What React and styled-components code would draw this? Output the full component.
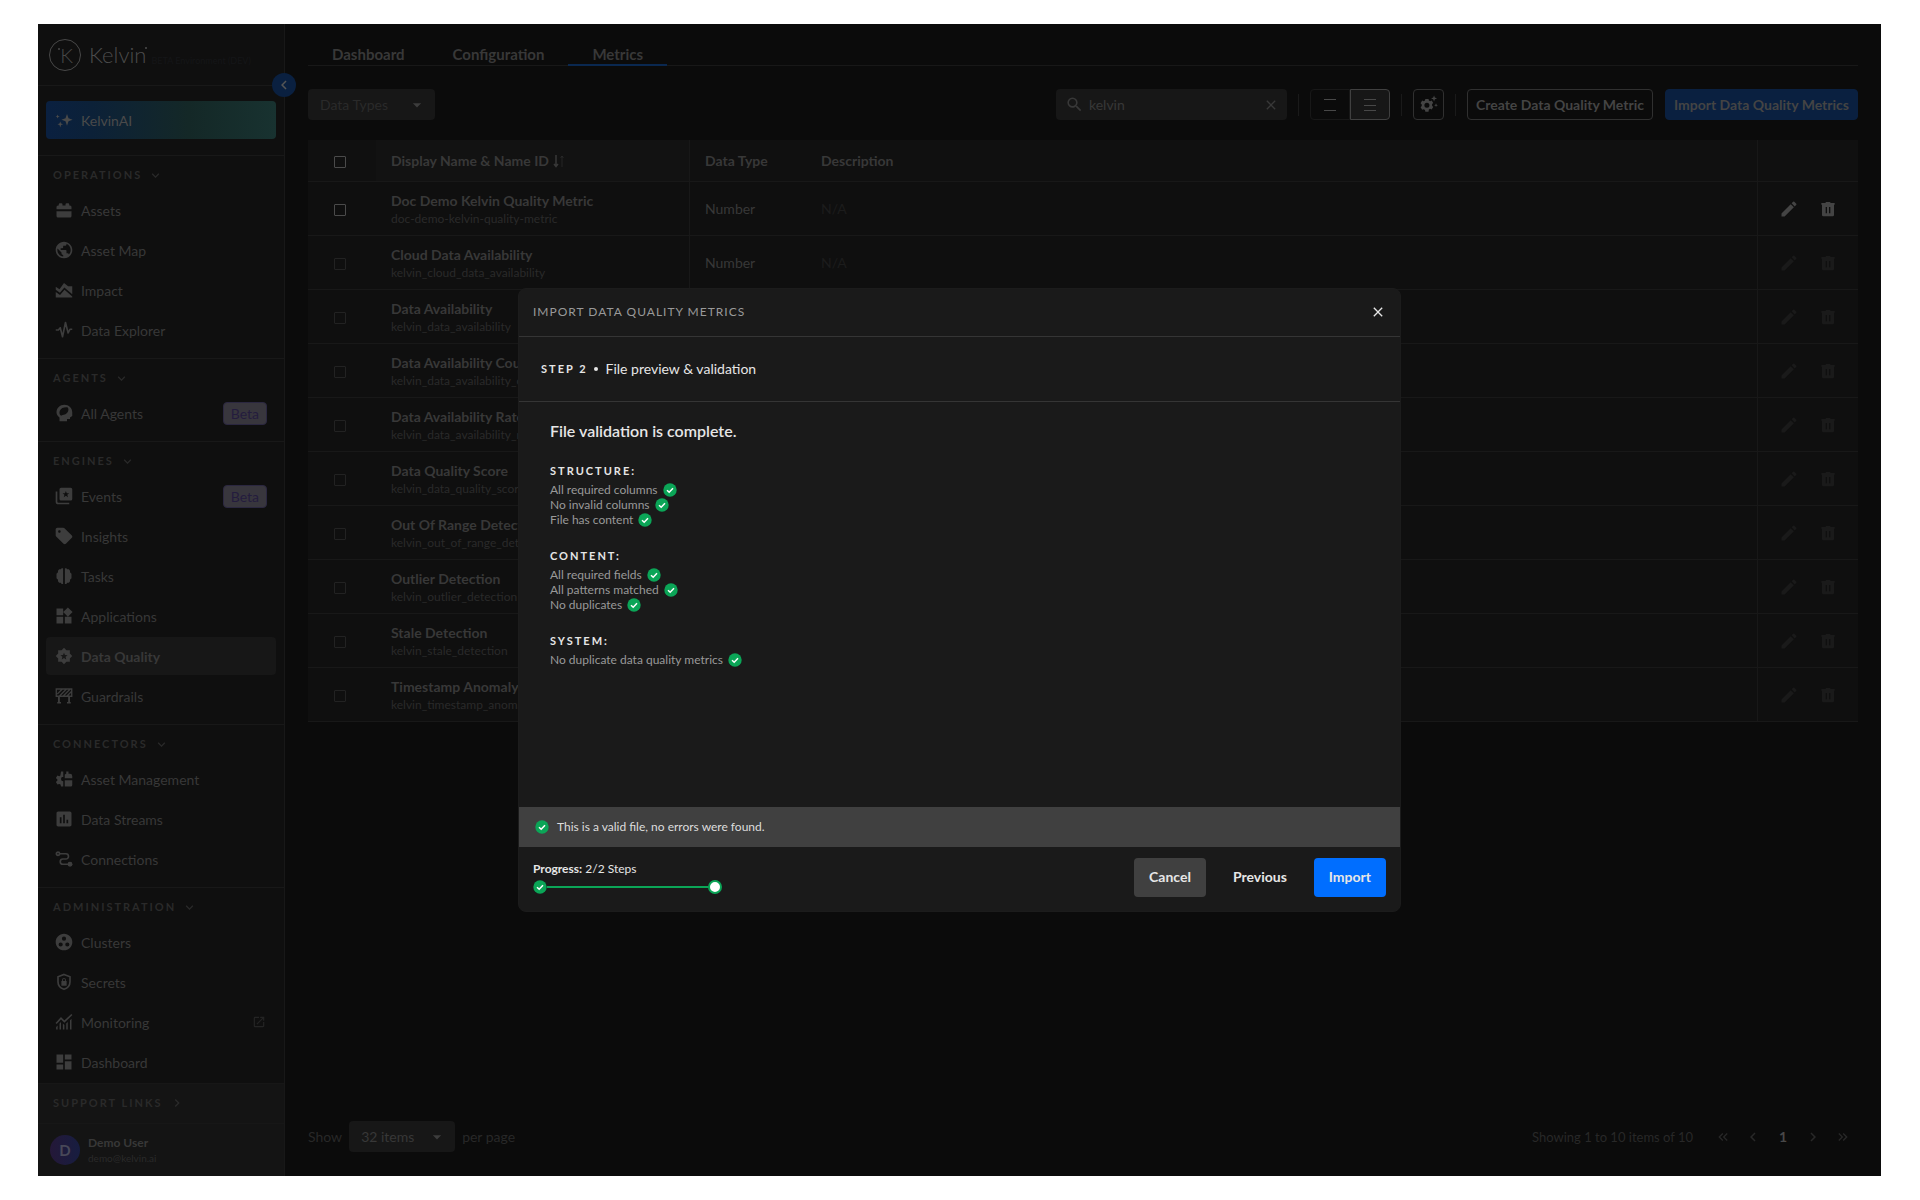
import React from 'react';
import styled, {createGlobalStyle, ThemeProvider} from 'styled-components';
import {
    MdPublic, MdSell, MdWidgets, MdInsertChart, MdGroupWork, MdDashboard,
    MdOpenInNew, MdEdit, MdSearch, MdClose, MdExpandMore, MdChevronRight, MdChevronLeft,
    MdArrowDropDown, MdKeyboardDoubleArrowLeft, MdKeyboardDoubleArrowRight,
} from 'react-icons/md';

const theme = {
    font: 'Lato, "Liberation Sans", sans-serif',
    weights: {
        semiBold: 600,
        bold: 700,
    },
    colors: {
        page: '#0b0b0b',
        sidebar: '#0f0f0f',
        table: '#0f0f0f',
        field: '#171717',
        line: '#181818',
        heading: '#2a2a2a',
        text: '#383838',
        icon: '#3d3d3d',
        faded: '#282828',
        blue: '#0a2040',
        green: '#0ba557',
        modal: '#1a1a1a',
        modalLine: '#353535',
        raised: '#404040',
        primary: '#006eff',
    },
};

const GlobalStyle = createGlobalStyle`
    *, *::before, *::after {
        box-sizing: border-box;
    }

    body {
        margin: 0;
        background: #fff;
        font-family: Lato, "Liberation Sans", sans-serif;
        font-size: 14px;
    }

    button, input, select {
        font: inherit;
        color: inherit;
        margin: 0;
    }

    button {
        padding: 0;
        border: 0;
        background: none;
    }

    h1, h2, h3, p, ul {
        margin: 0;
        padding: 0;
        font-weight: inherit;
        list-style: none;
    }

    a {
        color: inherit;
        text-decoration: none;
    }

    svg {
        flex: none;
    }
`;

/* icons missing from the icon package */

const Svg = ({size = 18, children}) => (
    <svg width={size} height={size} viewBox="0 0 24 24" fill="currentColor" aria-hidden="true">{children}</svg>
);

const AssetsIcon = () => (
    <Svg>
        <path d="M2 11V8a2 2 0 0 1 2-2h1V4.500a1.500 1.500 0 0 1 1.500-1.500h2A1.500 1.500 0 0 1 10 4.500V6h4V4.500A1.500 1.500 0 0 1 15.500 3h2A1.500 1.500 0 0 1 19 4.500V6h1a2 2 0 0 1 2 2v3z"/>
        <path d="M2 13.500h20V20a2 2 0 0 1-2 2H4a2 2 0 0 1-2-2z"/>
    </Svg>
);

const ImpactIcon = () => (
    <Svg>
        <path d="M1 7.500l5 3.500 6-8.500 5.500 4.500H23v10.500L12.500 8.500l-6 7L1 11.500z"/>
        <path d="M1 14.500l5.700 4.200 6-7L23 20.500V22H1z"/>
    </Svg>
);

const PulseIcon = () => (
    <Svg>
        <path d="M1 12h3.500L7 9l3 12 4-19 3.500 14 2.500-5h3" fill="none" stroke="currentColor" strokeWidth="2.200" strokeLinejoin="round"/>
    </Svg>
);

const AgentsIcon = () => (
    <Svg>
        <path fillRule="evenodd" d="M12.500 1C18.500 1 23 5.500 23 11v5l-3 2v2h-4v3H6v-5C3.300 16 2 13.700 2 11 2 5.500 6.500 1 12.500 1zM17 4.500c-5-.5-9 1-10.500 4.500-1 2.500-.5 4.800.8 6 1 .8 2 .3 2.700-.5 2.500-.2 5.500-1.500 7-4 1.200-2 1.200-4.500 0-6z"/>
    </Svg>
);

const EventsIcon = () => (
    <Svg>
        <path d="M2 6v13.500A2.500 2.500 0 0 0 4.500 22H19" fill="none" stroke="currentColor" strokeWidth="2.200"/>
        <path fillRule="evenodd" d="M8 1h13a2 2 0 0 1 2 2v13a2 2 0 0 1-2 2H8a2 2 0 0 1-2-2V3a2 2 0 0 1 2-2zm6.500 4.200l-1.200 3-3.200.2 2.500 2-.9 3.100 2.800-1.700 2.800 1.700-.9-3.100 2.500-2-3.200-.2z"/>
    </Svg>
);

const TasksIcon = () => (
    <Svg>
        <path d="M10.800 1.500v21H9L7.500 21H5.500L4 19v-2l-2-2V9l2-2V5l1.500-2h2L9 1.500z"/>
        <path d="M13.200 1.500v21H15l1.500-1.500h2L20 19v-2l2-2V9l-2-2V5l-1.500-2h-2L15 1.500z"/>
    </Svg>
);

const QualityIcon = () => (
    <Svg>
        <path fillRule="evenodd" d="M12 1l3.200 3.200h4.600v4.600L23 12l-3.200 3.200v4.600h-4.600L12 23l-3.200-3.200H4.200v-4.600L1 12l3.200-3.200V4.200h4.600zm0 6.500l-1.300 3.200-3.500.2 2.700 2.200-.9 3.400 3-1.900 3 1.900-.9-3.400 2.700-2.200-3.500-.2z"/>
    </Svg>
);

const GuardrailIcon = () => (
    <Svg>
        <path d="M1.700 2.700h20.600v9.600H1.700zM3 9.500L9.500 3M6 12l9-9M11 12l9-9M16 12l6-6" fill="none" stroke="currentColor" strokeWidth="1.800"/>
        <path d="M4 13h2.500v7H8v2H3v-2h1zM17.500 13H20v7h1v2h-5v-2h1.500z"/>
    </Svg>
);

const AssetManagementIcon = () => (
    <Svg>
        <path d="M11 2v20H8l-.6-2.600-1.700-.9-2.500.9-2-3.400 2-1.900v-1.500L1.200 10.800l2-3.400 2.500.9 1.500-1L8 2zm0 7a3 3 0 0 0 0 6z"/>
        <path d="M13 11V6l2-1V2h3v3h2a3 3 0 0 1 3 3v3zM13 13.500h10V20a2 2 0 0 1-2 2h-8z"/>
    </Svg>
);

const ConnectionsIcon = () => (
    <Svg>
        <g fill="none" stroke="currentColor" strokeWidth="2.200">
            <circle cx="4" cy="5" r="2.200"/>
            <path d="M6 5h8.500a3.500 3.500 0 0 1 0 7h-4a3.500 3.500 0 0 0 0 7H18"/>
        </g>
        <circle cx="20" cy="19" r="3.300"/>
    </Svg>
);

const SecretsIcon = () => (
    <Svg>
        <path d="M12 2l8 3v6.500c0 5-3.200 8.500-8 10.300-4.800-1.800-8-5.300-8-10.300V5z" fill="none" stroke="currentColor" strokeWidth="2.200"/>
        <path fillRule="evenodd" d="M8.500 10.500h1V9a2.500 2.500 0 0 1 5 0v1.500h1V17h-7zm2.300 0h2.400V9a1.200 1.200 0 0 0-2.400 0z"/>
    </Svg>
);

const MonitoringIcon = () => (
    <Svg>
        <path d="M1.500 14L8 7l4.500 4.500L22.500 2" fill="none" stroke="currentColor" strokeWidth="2.200"/>
        <path d="M1.500 18.500l2-2V22h-2zM6 14l2-2v10H6zM10.500 14l2 2v6h-2zM15 14l2-2v10h-2zM20 9.500l2-2V22h-2z"/>
    </Svg>
);

const SparkleIcon = () => (
    <Svg>
        <path d="M16 4l2 5.500 5.500 2-5.500 2-2 6-2-6-5.500-2 5.500-2z"/>
        <path d="M7 14l1 2.800 2.800 1-2.800 1L7 22l-1-3.200-2.800-1 2.800-1zM3.500 4.500l.8 2 2 .8-2 .8-.8 2-.8-2-2-.8 2-.8z"/>
    </Svg>
);

const GearSparkIcon = () => (
    <Svg size={19}>
        <path fillRule="evenodd" d="M8 5h4l.5 2 1.500.8 2-.8 2 3-1.500 1.500v2l1.500 1.500-2 3.200-2-.7-1.500.8L12 21H8l-.5-2.200L6 18l-2 .7-2-3.200L3.500 14v-2L2 10.500 4 7l2 .8L7.500 7zM10 9.700a3.200 3.200 0 1 0 0 6.400 3.200 3.200 0 0 0 0-6.400z"/>
        <path d="M19 .5l1 2.800 2.800 1-2.800 1-1 2.800-1-2.800-2.800-1 2.800-1zM21.500 10.500l.7 1.700 1.700.7-1.700.7-.7 1.700-.7-1.700-1.700-.7 1.700-.7z"/>
    </Svg>
);

const TrashIcon = () => (
    <Svg size={16}>
        <path fillRule="evenodd" d="M2 3h6l1-1.500h6L16 3h6v2.500h-1V21a2 2 0 0 1-2 2H5a2 2 0 0 1-2-2V5.500H2zm6.500 6v9.500h2V9zm5 0v9.500h2V9z"/>
    </Svg>
);

const SortIcon = () => (
    <svg width="12" height="14" viewBox="0 0 12 14" fill="none" stroke="currentColor" aria-hidden="true">
        <path d="M3 1v11M1 10l2 2.500L5 10" strokeWidth="1.500"/>
        <path d="M9 13V2M7.500 4L9 2l1.500 2" opacity="0.500"/>
    </svg>
);

const LinesIcon = ({rows}) => (
    <svg width="12" height="12" viewBox="0 0 12 12" stroke="currentColor" aria-hidden="true">
        {rows.map(y => <path key={y} d={`M0 ${y}h12`}/>)}
    </svg>
);

const CheckIcon = () => (
    <svg width="14" height="14" viewBox="0 0 14 14" aria-hidden="true">
        <circle cx="7" cy="7" r="6.700" fill={theme.colors.green}/>
        <path d="M4 7.200l2.200 2.100L10 5.300" fill="none" stroke="#fff" strokeWidth="1.500"/>
    </svg>
);

/* frame */

const Page = styled.div`
    display: flex;
    min-height: 100vh;
    padding: 24px 39px 24px 38px;
`;

const Frame = styled.div`
    position: relative;
    display: flex;
    flex: 1;
    min-width: 0;
    background: ${props => props.theme.colors.page};
    color: ${props => props.theme.colors.text};
    font-family: ${props => props.theme.font};
`;

/* sidebar */

const Sidebar = styled.aside`
    display: flex;
    flex-direction: column;
    flex: none;
    width: 247px;
    background: ${props => props.theme.colors.sidebar};
    border-right: 1px solid ${props => props.theme.colors.line};
`;

const Brand = styled.header`
    position: relative;
    display: flex;
    align-items: center;
    height: 62px;
    padding: 0 11px;
    border-bottom: 1px solid ${props => props.theme.colors.line};
`;

const BrandMark = styled.span`
    position: relative;
    display: grid;
    place-items: center;
    width: 32px;
    height: 32px;
    margin-right: 8px;
    padding-left: 3px;
    border: 1px solid #484848;
    border-radius: 50%;
    color: #484848;
    font-size: 20px;
    font-weight: 300;

    &::before {
        content: '';
        position: absolute;
        left: 8px;
        top: 8px;
        width: 2px;
        height: 2px;
        border-radius: 50%;
        background: currentColor;
    }
`;

const BrandName = styled.span`
    position: relative;
    color: #4c4c4c;
    font-size: 22px;
    font-weight: 300;
    line-height: 26px;

    &::after {
        content: '';
        position: absolute;
        right: -1px;
        top: 5px;
        width: 2px;
        height: 2px;
        border-radius: 50%;
        background: currentColor;
    }
`;

const BrandNote = styled.small`
    padding: 12px 0 0 5px;
    color: #151618;
    font-size: 9px;
    white-space: nowrap;
`;

const Collapse = styled.button`
    position: absolute;
    right: -12px;
    bottom: -12px;
    display: grid;
    place-items: center;
    width: 24px;
    height: 24px;
    border-radius: 50%;
    background: ${props => props.theme.colors.blue};
    color: #555;
`;

const Assistant = styled.div`
    padding: 15px 8px 16px;
    border-bottom: 1px solid ${props => props.theme.colors.line};
`;

const AssistantLink = styled.a`
    display: flex;
    align-items: center;
    gap: 8px;
    height: 38px;
    padding: 0 9px;
    border-radius: 4px;
    background: linear-gradient(90deg, #0a2040, #0c2138 20%, #142827 62%, #183230);
    color: #4a4a4a;
`;

const Nav = styled.nav`
    flex: 1;
`;

const Section = styled.section`
    padding: 9px 8px;
    border-bottom: 1px solid ${props => props.theme.colors.line};

    &:last-child {
        padding-bottom: 0;
        border-bottom: 0;
    }
`;

const SectionTitle = styled.h2`
    color: ${props => props.theme.colors.heading};
    font-size: 11px;
    font-weight: ${props => props.theme.weights.bold};
    letter-spacing: 2px;
    line-height: 20px;
    text-transform: uppercase;
`;

const SectionToggle = styled.button`
    display: flex;
    align-items: center;
    gap: 6px;
    padding: 0 7px;
    letter-spacing: inherit;
    text-transform: inherit;
`;

const NavList = styled.ul`
    display: flex;
    flex-direction: column;
    gap: 2px;
    padding-top: 6px;
`;

const NavLink = styled.a`
    display: flex;
    align-items: center;
    gap: 8px;
    height: 38px;
    padding: 0 9px;
    border-radius: 4px;
    background: ${props => props.$active ? props.theme.colors.field : 'none'};
    font-weight: ${props => props.$active ? props.theme.weights.bold : 400};

    > svg {
        margin: 0 1px 0 auto;
        color: #242424;
    }
`;

const NavIcon = styled.span`
    display: flex;
    align-items: center;
    justify-content: center;
    width: 18px;
    color: ${props => props.theme.colors.icon};
`;

const Badge = styled.span`
    margin-left: auto;
    padding: 0 7px;
    border: 1px solid #2b2740;
    border-radius: 4px;
    background: #38363d;
    color: #241c3e;
    line-height: 21px;
`;

const SidebarFooter = styled.footer`
    background: #141414;
    border-top: 1px solid #171717;
`;

const Support = styled(SectionTitle)`
    padding: 9px 8px 10px;
    border-bottom: 1px solid #171717;
`;

const User = styled.div`
    display: flex;
    align-items: center;
    gap: 8px;
    height: 52px;
    padding: 0 12px;
    font-size: 12px;
    font-weight: ${props => props.theme.weights.bold};
`;

const Avatar = styled.span`
    display: grid;
    place-items: center;
    width: 30px;
    height: 30px;
    border-radius: 50%;
    background: linear-gradient(90deg, #241838, #171d40);
    color: #484858;
    font-size: 15px;
`;

const Email = styled.div`
    color: ${props => props.theme.colors.heading};
    font-size: 10px;
    font-weight: 400;
    line-height: 16px;
`;

/* main area */

const Main = styled.main`
    display: flex;
    flex: 1;
    flex-direction: column;
    min-width: 0;
    padding: 20px 23px 24px;
`;

const Tabs = styled.nav`
    display: flex;
    border-bottom: 1px solid ${props => props.theme.colors.line};
`;

const Tab = styled.a`
    padding: 0 24px;
    margin-bottom: -1px;
    border-bottom: 2px solid ${props => props.$active ? '#0a2850' : 'transparent'};
    font-size: 15px;
    font-weight: ${props => props.theme.weights.bold};
    line-height: 20px;
`;

const Toolbar = styled.div`
    display: flex;
    align-items: center;
    gap: 12px;
    padding: 23px 0 20px;
`;

const SelectBox = styled.span`
    position: relative;
    display: inline-flex;
    align-items: center;
    width: ${props => props.$width};
    color: ${props => props.$muted ? '#2a2a2a' : props.theme.colors.text};

    svg {
        position: absolute;
        right: 8px;
        color: ${props => props.theme.colors.icon};
        pointer-events: none;
    }
`;

const Select = styled.select`
    width: 100%;
    height: 31px;
    padding: 0 28px 0 12px;
    border: 0;
    border-radius: 4px;
    background: ${props => props.theme.colors.field};
    appearance: none;
`;

const Search = styled.label`
    display: flex;
    align-items: center;
    gap: 5px;
    width: 231px;
    height: 31px;
    margin-left: auto;
    padding: 0 8px 0 9px;
    border-radius: 4px;
    background: ${props => props.theme.colors.field};

    input {
        flex: 1;
        min-width: 0;
        padding: 0;
        border: 0;
        background: none;
    }

    button {
        display: flex;
    }
`;

const Divider = styled.span`
    width: 1px;
    height: 22px;
    margin: 0 -1px;
    background: #1a1a1a;
`;

const Toggle = styled.div`
    display: flex;
`;

const ToggleButton = styled.button`
    display: grid;
    place-items: center;
    width: 40px;
    height: 31px;
    border: 1px solid ${props => props.$active ? '#404040' : '#181818'};
    border-radius: ${props => props.$active ? '0 4px 4px 0' : '4px 0 0 4px'};
    background: ${props => props.$active ? props.theme.colors.field : 'none'};
    color: #484848;
`;

const ActionButton = styled.button`
    display: grid;
    place-items: center;
    min-width: 31px;
    height: 31px;
    padding: 0 ${props => props.$icon ? '0' : '8px'};
    border: 1px solid ${props => props.$filled ? props.theme.colors.blue : '#303030'};
    border-radius: 4px;
    background: ${props => props.$filled ? props.theme.colors.blue : 'none'};
    color: #444;
    font-weight: ${props => props.theme.weights.bold};
    white-space: nowrap;
`;

/* table */

const Table = styled.table`
    width: 100%;
    border-spacing: 0;
    table-layout: fixed;
    background: ${props => props.theme.colors.table};

    th, td {
        padding: 0 15px;
        border-bottom: 1px solid ${props => props.theme.colors.line};
        text-align: left;
        white-space: nowrap;
    }

    th {
        height: 42px;
        background: #101010;
        font-weight: ${props => props.theme.weights.bold};
    }

    td {
        height: 54px;
    }

    th:first-child, td:first-child {
        width: 68px;
        padding: 0 4px 0 0;
        text-align: center;
    }

    th:nth-child(2), td:nth-child(2) {
        width: 314px;
        border-right: 1px solid ${props => props.theme.colors.line};
    }

    th:nth-child(2) {
        background: #121212;
    }

    th:nth-child(3) {
        width: 116px;
    }

    th:last-child, td:last-child {
        width: 101px;
        padding: 0 16px 0 14px;
        border-left: 1px solid ${props => props.theme.colors.line};
    }
`;

const SortLabel = styled.span`
    display: flex;
    align-items: center;
    gap: 4px;
`;

const Checkbox = styled.input.attrs({type: 'checkbox'})`
    width: 12px;
    height: 12px;
    margin: 0;
    border: 1px solid #4a4a4a;
    border-radius: 1px;
    appearance: none;
    vertical-align: middle;

    &:disabled {
        border-color: #222;
    }
`;

const MetricName = styled.div`
    padding-top: 2px;
    font-weight: ${props => props.theme.weights.bold};
    line-height: 18px;
`;

const MetricId = styled.div`
    color: ${props => props.theme.colors.heading};
    font-size: 12px;
    line-height: 18px;
`;

const Missing = styled.span`
    color: #1c1c1c;
`;

const RowActions = styled.div`
    display: flex;
    align-items: center;
    justify-content: center;
    gap: 21px;

    button {
        display: flex;
        color: #444;
    }

    button:disabled {
        color: #1a1a1a;
    }
`;

const TableFooter = styled.footer`
    display: flex;
    align-items: center;
    gap: 7px;
    margin-top: auto;
    color: ${props => props.theme.colors.faded};
`;

const Range = styled.span`
    margin-left: auto;
    font-size: 13px;
`;

const Pager = styled.nav`
    display: flex;
    align-items: center;
    margin-left: 8px;

    button {
        display: grid;
        place-items: center;
        width: 30px;
        height: 31px;
    }
`;

const CurrentPage = styled.button`
    color: #484848;
    font-weight: ${props => props.theme.weights.bold};
`;

/* modal */

const Overlay = styled.div`
    position: absolute;
    inset: 0;
    display: flex;
    align-items: center;
    justify-content: center;
`;

const Modal = styled.section`
    display: flex;
    flex-direction: column;
    width: 883px;
    max-width: 100%;
    border: 1px solid #1c1c1c;
    border-radius: 8px;
    background: ${props => props.theme.colors.modal};
    color: #e6e6e6;
`;

const ModalHeader = styled.header`
    display: flex;
    align-items: center;
    justify-content: space-between;
    height: 48px;
    padding: 0 14px 2px;
    border-bottom: 1px solid ${props => props.theme.colors.modalLine};

    button {
        display: flex;
    }
`;

const ModalTitle = styled.h1`
    color: #999;
    font-size: 12px;
    letter-spacing: 1px;
    text-transform: uppercase;
`;

const StepBar = styled.div`
    display: flex;
    align-items: center;
    gap: 6px;
    height: 65px;
    padding: 0 22px 1px;
    border-bottom: 1px solid ${props => props.theme.colors.modalLine};
`;

const Dot = styled.span`
    width: 4px;
    height: 4px;
    margin-right: 2px;
    border-radius: 50%;
    background: #e6e6e6;
`;

const Caps = styled.h3`
    font-size: 11px;
    font-weight: ${props => props.theme.weights.bold};
    letter-spacing: 2px;
    line-height: 20px;
    text-transform: uppercase;
`;

const ModalBody = styled.div`
    display: flex;
    flex-direction: column;
    gap: 19px;
    min-height: 405px;
    padding: 18px 31px;
`;

const Result = styled.h2`
    font-size: 16px;
    font-weight: ${props => props.theme.weights.semiBold};
    line-height: 22px;
`;

const CheckLine = styled.li`
    display: flex;
    align-items: center;
    gap: 5px;
    color: #999;
    font-size: 12px;
    line-height: 15px;
`;

const CheckGroup = styled.div`
    ${Caps} {
        margin-bottom: 1px;
    }
`;

const Status = styled.p`
    display: flex;
    align-items: center;
    gap: 8px;
    height: 40px;
    padding: 0 16px 1px;
    background: ${props => props.theme.colors.raised};
    color: #ddd;
    font-size: 12px;
`;

const ModalFooter = styled.footer`
    display: flex;
    align-items: center;
    justify-content: space-between;
    height: 64px;
    padding: 0 14px 4px;
`;

const Progress = styled.div`
    width: 189px;
    font-size: 12px;
    line-height: 18px;
`;

const Steps = styled.div`
    display: flex;
    align-items: center;
    margin-top: 2px;
    line-height: 14px;
`;

const StepLine = styled.span`
    flex: 1;
    height: 2px;
    background: ${props => props.theme.colors.green};
`;

const StepDot = styled.span`
    width: 14px;
    height: 14px;
    border: 2px solid ${props => props.theme.colors.green};
    border-radius: 50%;
    background: #fff;
`;

const ModalActions = styled.div`
    display: flex;
    gap: 12px;
`;

const ModalButton = styled.button`
    height: 39px;
    padding: 0 15px 1px;
    border-radius: 4px;
    background: ${props => props.$color || 'none'};
    font-weight: ${props => props.theme.weights.bold};
`;

const sections = [
    {title: 'Operations', items: [
        ['Assets', AssetsIcon],
        ['Asset Map', MdPublic],
        ['Impact', ImpactIcon],
        ['Data Explorer', PulseIcon],
    ]},
    {title: 'Agents', items: [
        ['All Agents', AgentsIcon, 'beta'],
    ]},
    {title: 'Engines', items: [
        ['Events', EventsIcon, 'beta'],
        ['Insights', MdSell],
        ['Tasks', TasksIcon],
        ['Applications', MdWidgets],
        ['Data Quality', QualityIcon, 'active'],
        ['Guardrails', GuardrailIcon],
    ]},
    {title: 'Connectors', items: [
        ['Asset Management', AssetManagementIcon],
        ['Data Streams', MdInsertChart],
        ['Connections', ConnectionsIcon],
    ]},
    {title: 'Administration', items: [
        ['Clusters', MdGroupWork],
        ['Secrets', SecretsIcon],
        ['Monitoring', MonitoringIcon, 'external'],
        ['Dashboard', MdDashboard],
    ]},
];

const metrics = [
    ['Doc Demo Kelvin Quality Metric', 'doc-demo-kelvin-quality-metric'],
    ['Cloud Data Availability', 'kelvin_cloud_data_availability'],
    ['Data Availability', 'kelvin_data_availability'],
    ['Data Availability Count', 'kelvin_data_availability_count'],
    ['Data Availability Rate', 'kelvin_data_availability_rate'],
    ['Data Quality Score', 'kelvin_data_quality_score'],
    ['Out Of Range Detection', 'kelvin_out_of_range_detection'],
    ['Outlier Detection', 'kelvin_outlier_detection'],
    ['Stale Detection', 'kelvin_stale_detection'],
    ['Timestamp Anomaly', 'kelvin_timestamp_anomaly'],
];

const checks = [
    ['Structure:', ['All required columns', 'No invalid columns', 'File has content']],
    ['Content:', ['All required fields', 'All patterns matched', 'No duplicates']],
    ['System:', ['No duplicate data quality metrics']],
];

const SideMenu = () => (
    <Sidebar>
        <Brand>
            <BrandMark>K</BrandMark>
            <BrandName>Kelvin</BrandName>
            <BrandNote>BETA Environment (DEV)</BrandNote>
            <Collapse aria-label="Collapse menu"><MdChevronLeft size={18}/></Collapse>
        </Brand>
        <Assistant>
            <AssistantLink href="#ai"><SparkleIcon/>KelvinAI</AssistantLink>
        </Assistant>
        <Nav>
            {sections.map(({title, items}) => (
                <Section key={title}>
                    <SectionTitle>
                        <SectionToggle>{title}<MdExpandMore size={15}/></SectionToggle>
                    </SectionTitle>
                    <NavList>
                        {items.map(([label, Icon, kind]) => (
                            <li key={label}>
                                <NavLink href="#nav" $active={kind === 'active'}>
                                    <NavIcon><Icon size={20}/></NavIcon>
                                    <span>{label}</span>
                                    {kind === 'beta' && <Badge>Beta</Badge>}
                                    {kind === 'external' && <MdOpenInNew size={14}/>}
                                </NavLink>
                            </li>
                        ))}
                    </NavList>
                </Section>
            ))}
        </Nav>
        <SidebarFooter>
            <Support>
                <SectionToggle>Support links<MdChevronRight size={16}/></SectionToggle>
            </Support>
            <User>
                <Avatar>D</Avatar>
                <div>
                    Demo User
                    <Email>demo@kelvin.ai</Email>
                </div>
            </User>
        </SidebarFooter>
    </Sidebar>
);

const MetricsTable = () => (
    <Table>
        <thead>
            <tr>
                <th><Checkbox aria-label="Select all"/></th>
                <th><SortLabel>Display Name &amp; Name ID<SortIcon/></SortLabel></th>
                <th>Data Type</th>
                <th>Description</th>
                <th aria-label="Actions"/>
            </tr>
        </thead>
        <tbody>
            {metrics.map(([name, id], index) => (
                <tr key={id}>
                    <td><Checkbox aria-label={name} disabled={index > 0}/></td>
                    <td>
                        <MetricName>{name}</MetricName>
                        <MetricId>{id}</MetricId>
                    </td>
                    <td>Number</td>
                    <td><Missing>N/A</Missing></td>
                    <td>
                        <RowActions>
                            <button aria-label="Edit" disabled={index > 0}><MdEdit size={20}/></button>
                            <button aria-label="Delete" disabled={index > 0}><TrashIcon/></button>
                        </RowActions>
                    </td>
                </tr>
            ))}
        </tbody>
    </Table>
);

const ImportModal = () => (
    <Overlay>
        <Modal role="dialog" aria-labelledby="import-title">
            <ModalHeader>
                <ModalTitle id="import-title">Import data quality metrics</ModalTitle>
                <button aria-label="Close"><MdClose size={16}/></button>
            </ModalHeader>
            <StepBar>
                <Caps>Step 2</Caps>
                <Dot/>
                <span>File preview &amp; validation</span>
            </StepBar>
            <ModalBody>
                <Result>File validation is complete.</Result>
                {checks.map(([title, lines]) => (
                    <CheckGroup key={title}>
                        <Caps>{title}</Caps>
                        <ul>
                            {lines.map(line => <CheckLine key={line}>{line}<CheckIcon/></CheckLine>)}
                        </ul>
                    </CheckGroup>
                ))}
            </ModalBody>
            <Status><CheckIcon/>This is a valid file, no errors were found.</Status>
            <ModalFooter>
                <Progress>
                    <b>Progress:</b> 2/2 Steps
                    <Steps><CheckIcon/><StepLine/><StepDot/></Steps>
                </Progress>
                <ModalActions>
                    <ModalButton $color={theme.colors.raised}>Cancel</ModalButton>
                    <ModalButton>Previous</ModalButton>
                    <ModalButton $color={theme.colors.primary}>Import</ModalButton>
                </ModalActions>
            </ModalFooter>
        </Modal>
    </Overlay>
);

export default function App() {
    return (
        <ThemeProvider theme={theme}>
            <GlobalStyle/>
            <Page>
                <Frame>
                    <SideMenu/>
                    <Main>
                        <Tabs>
                            <Tab href="#dashboard">Dashboard</Tab>
                            <Tab href="#configuration">Configuration</Tab>
                            <Tab href="#metrics" $active>Metrics</Tab>
                        </Tabs>
                        <Toolbar>
                            <SelectBox $width="127px" $muted>
                                <Select aria-label="Data Types"><option>Data Types</option></Select>
                                <MdArrowDropDown size={20}/>
                            </SelectBox>
                            <Search>
                                <MdSearch size={19}/>
                                <input aria-label="Search" defaultValue="kelvin"/>
                                <button aria-label="Clear"><MdClose size={16}/></button>
                            </Search>
                            <Divider/>
                            <Toggle>
                                <ToggleButton aria-label="Comfortable rows"><LinesIcon rows={[0.5, 11.5]}/></ToggleButton>
                                <ToggleButton aria-label="Compact rows" $active><LinesIcon rows={[0.5, 6.5, 11.5]}/></ToggleButton>
                            </Toggle>
                            <Divider/>
                            <ActionButton $icon aria-label="Settings"><GearSparkIcon/></ActionButton>
                            <Divider/>
                            <ActionButton>Create Data Quality Metric</ActionButton>
                            <ActionButton $filled>Import Data Quality Metrics</ActionButton>
                        </Toolbar>
                        <MetricsTable/>
                        <TableFooter>
                            <label htmlFor="page-size">Show</label>
                            <SelectBox $width="106px">
                                <Select id="page-size"><option>32 items</option></Select>
                                <MdArrowDropDown size={20}/>
                            </SelectBox>
                            <span>per page</span>
                            <Range>Showing 1 to 10 items of 10</Range>
                            <Pager aria-label="Pages">
                                <button aria-label="First page"><MdKeyboardDoubleArrowLeft size={16}/></button>
                                <button aria-label="Previous page"><MdChevronLeft size={18}/></button>
                                <CurrentPage>1</CurrentPage>
                                <button aria-label="Next page"><MdChevronRight size={18}/></button>
                                <button aria-label="Last page"><MdKeyboardDoubleArrowRight size={16}/></button>
                            </Pager>
                        </TableFooter>
                    </Main>
                    <ImportModal/>
                </Frame>
            </Page>
        </ThemeProvider>
    );
}
